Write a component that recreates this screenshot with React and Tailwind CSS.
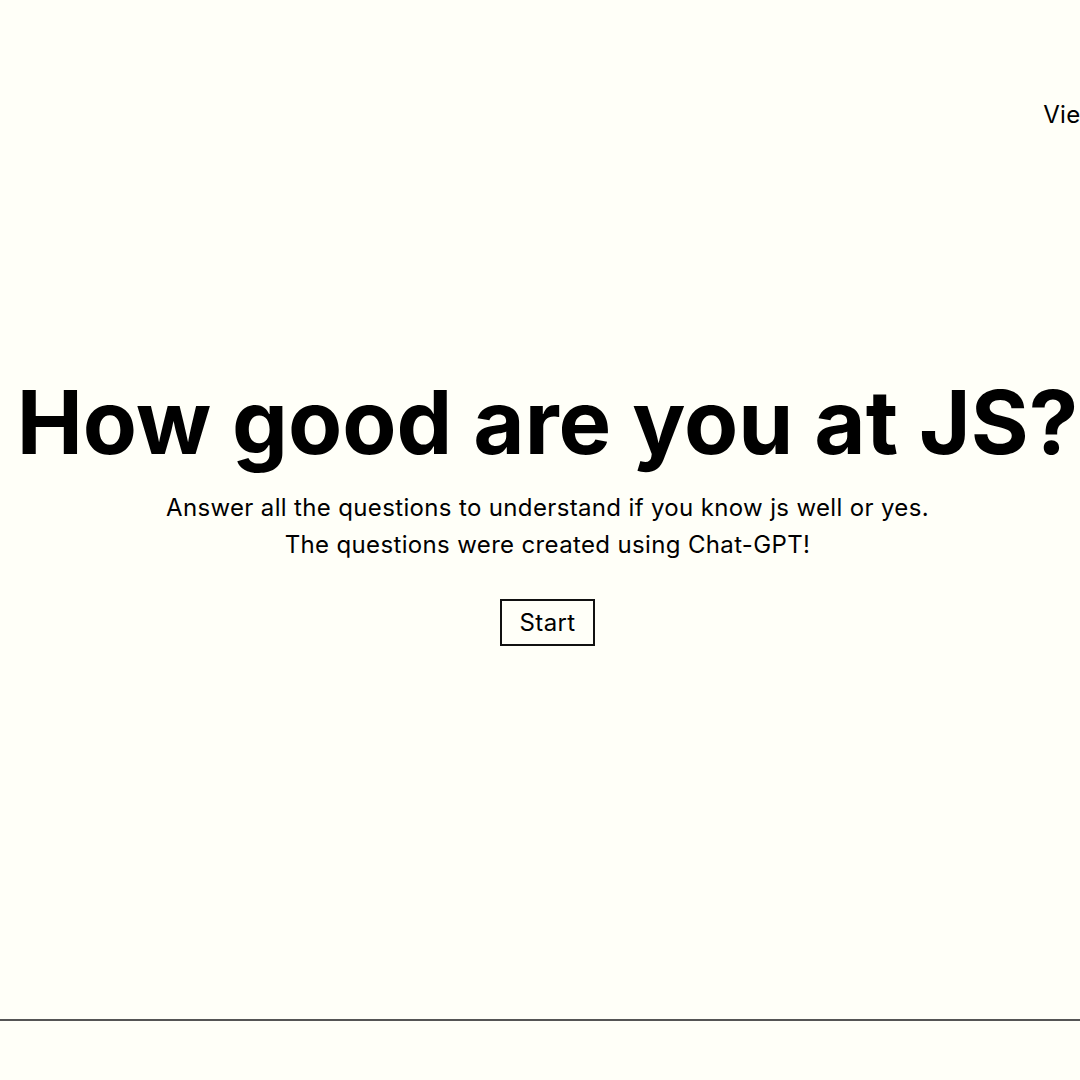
import React from 'react';

export default function App() {
  return (
    <div className="w-full h-[1080px] overflow-hidden bg-[#fffff8] text-black font-['Inter','Liberation_Sans',sans-serif]">
      <div className="w-[1095px] h-full flex flex-col">
        <header className="h-[230px] flex items-center justify-end">
          <nav className="whitespace-nowrap mr-[-129px] text-[24px] tracking-[0.35px]">
            <a href="#">View on GitHub</a>
          </nav>
        </header>

        <main className="flex-1 flex flex-col items-center pt-[148px]">
          <h1 className="text-[88.5px] leading-none font-bold whitespace-nowrap">
            How good are you at JS?
          </h1>
          <div className="mt-[22px] text-center text-[24px] leading-[37px] tracking-[0.35px]">
            <p>Answer all the questions to understand if you know js well or yes.</p>
            <p>The questions were created using Chat-GPT!</p>
          </div>
          <button className="mt-[36px] border-2 border-[#111] px-[18px] py-[5px] text-[24px] leading-[33px] tracking-[0.35px]">
            Start
          </button>
        </main>

        <footer className="h-[61px] border-t-2 border-[#555]" />
      </div>
    </div>
  );
}
